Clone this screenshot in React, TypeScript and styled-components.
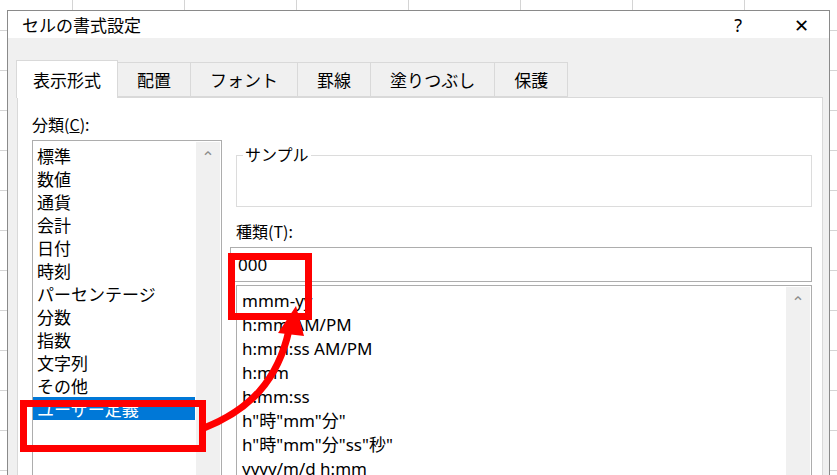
import styled, { createGlobalStyle } from 'styled-components';

const Global = createGlobalStyle`
  html, body { margin: 0; padding: 0; }
  body {
    width: 837px;
    height: 475px;
    overflow: hidden;
    font-family: 'Noto Sans CJK JP', 'Noto Sans', sans-serif;
    color: #000;
    background-color: #fff;
    background-image:
      linear-gradient(#d4d4d4 1px, transparent 1px),
      linear-gradient(90deg, #d4d4d4 1px, transparent 1px);
    background-size: 112px 40px;
    background-position: -40px -10px;
  }
`;

const categories = ['標準', '数値', '通貨', '会計', '日付', '時刻', 'パーセンテージ', '分数', '指数', '文字列', 'その他', 'ユーザー定義'];
const formats = ['mmm-yy', 'h:mm AM/PM', 'h:mm:ss AM/PM', 'h:mm', 'h:mm:ss', 'h"時"mm"分"', 'h"時"mm"分"ss"秒"', 'yyyy/m/d h:mm'];
const tabs = ['表示形式', '配置', 'フォント', '罫線', '塗りつぶし', '保護'];

export default function App() {
  return (
    <>
      <Global />
      <Dialog>
        <TitleBar>
          <Title>セルの書式設定</Title>
          <TitleButtons>
            <span>?</span>
            <span>✕</span>
          </TitleButtons>
        </TitleBar>
        <Body>
          <TabRow>
            {tabs.map((t, i) => (
              <Tab key={t} active={i === 0}>{t}</Tab>
            ))}
          </TabRow>
          <Panel>
            <LeftCol>
              <Label>分類(<u>C</u>):</Label>
              <ListBox>
                <Items>
                  {categories.map((c, i) => (
                    <Item key={c} selected={i === categories.length - 1}>{c}</Item>
                  ))}
                </Items>
                <ScrollBar><Chevron>⌃</Chevron></ScrollBar>
              </ListBox>
            </LeftCol>
            <RightCol>
              <SampleGroup>
                <Legend>サンプル</Legend>
              </SampleGroup>
              <Label>種類(T):</Label>
              <Input>000</Input>
              <FormatList>
                <Items>
                  {formats.map((f) => (
                    <FormatItem key={f}>{f}</FormatItem>
                  ))}
                </Items>
                <ScrollBar><Chevron>⌃</Chevron></ScrollBar>
              </FormatList>
            </RightCol>
          </Panel>
        </Body>
      </Dialog>
      <Highlight style={{ left: 20, top: 400, width: 186, height: 52 }} />
      <Highlight style={{ left: 228, top: 253, width: 84, height: 67 }} />
      <Arrow width="837" height="475" viewBox="0 0 837 475">
        <path d="M204 428 C 250 410, 278 380, 289 330" fill="none" stroke="#f00" strokeWidth="7" />
        <polygon points="278,333 296,306 304,336" fill="#f00" />
      </Arrow>
    </>
  );
}

const Dialog = styled.div`
  margin: 10px 0 0 7px;
  width: 821px;
  height: 470px;
  border: 1px solid #8a8a8a;
  background: #f0f0f0;
  display: flex;
  flex-direction: column;
`;

const TitleBar = styled.div`
  height: 48px;
  background: #fff;
  display: flex;
  align-items: center;
  justify-content: space-between;
  padding: 0 20px 0 14px;
`;

const Title = styled.div`
  font-size: 17px;
`;

const TitleButtons = styled.div`
  display: flex;
  gap: 52px;
  font-size: 18px;
  font-family: 'Noto Sans', sans-serif;
`;

const Body = styled.div`
  padding: 22px 6px 0 9px;
  flex: 1;
  display: flex;
  flex-direction: column;
`;

const TabRow = styled.div`
  display: flex;
  align-items: flex-end;
  height: 37px;
`;

const Tab = styled.div<{ active?: boolean }>`
  height: ${({ active }) => (active ? 37 : 33)}px;
  padding: 0 ${({ active }) => (active ? 16 : 19)}px;
  margin-bottom: ${({ active }) => (active ? -1 : 0)}px;
  background: ${({ active }) => (active ? '#fff' : '#f0f0f0')};
  border: 1px solid #d9d9d9;
  border-bottom: ${({ active }) => (active ? 'none' : '1px solid #d9d9d9')};
  margin-left: -1px;
  display: flex;
  align-items: center;
  font-size: 17px;
  position: relative;
  z-index: ${({ active }) => (active ? 1 : 0)};
`;

const Panel = styled.div`
  flex: 1;
  background: #fff;
  border: 1px solid #d9d9d9;
  border-bottom: none;
  display: flex;
  gap: 14px;
  padding: 14px 10px 0 14px;
`;

const LeftCol = styled.div`
  width: 190px;
  display: flex;
  flex-direction: column;
`;

const RightCol = styled.div`
  flex: 1;
  display: flex;
  flex-direction: column;
  padding-top: 43px;
`;

const Label = styled.div`
  font-size: 16px;
  height: 28px;
`;

const ListBox = styled.div`
  flex: 1;
  border: 1px solid #adadad;
  display: flex;
`;

const Items = styled.div`
  flex: 1;
  padding-top: 3px;
`;

const Item = styled.div<{ selected?: boolean }>`
  font-size: 17px;
  line-height: 23px;
  padding-left: 4px;
  background: ${({ selected }) => (selected ? '#0078d7' : 'transparent')};
  color: ${({ selected }) => (selected ? '#fff' : '#000')};
`;

const ScrollBar = styled.div`
  width: 24px;
  background: #f0f0f0;
  margin: 1px;
  display: flex;
  justify-content: center;
`;

const Chevron = styled.span`
  font-size: 16px;
  color: #8c8c8c;
  font-family: 'DejaVu Sans', sans-serif;
  margin-top: 6px;
  height: 16px;
`;

const SampleGroup = styled.div`
  height: 50px;
  border: 1px solid #dcdcdc;
  margin: 0 0 12px 0;
  position: relative;
`;

const Legend = styled.span`
  position: absolute;
  top: -14px;
  left: 6px;
  background: #fff;
  padding: 0 2px;
  font-size: 16px;
`;

const Input = styled.div`
  height: 33px;
  border: 1px solid #adadad;
  font-family: 'Noto Sans', sans-serif;
  font-size: 17px;
  display: flex;
  align-items: center;
  padding-left: 7px;
  margin-left: -6px;
`;

const FormatList = styled.div`
  flex: 1;
  border: 1px solid #adadad;
  border-bottom: none;
  margin-top: 3px;
  display: flex;

  ${Items} { font-family: 'Noto Sans', 'Noto Sans CJK JP', sans-serif; }
`;

const FormatItem = styled.div`
  font-size: 17px;
  line-height: 24px;
  padding-left: 5px;
`;

const Highlight = styled.div`
  position: absolute;
  box-sizing: border-box;
  border: 7px solid #f00;
`;

const Arrow = styled.svg`
  position: absolute;
  left: 0;
  top: 0;
  pointer-events: none;
`;
